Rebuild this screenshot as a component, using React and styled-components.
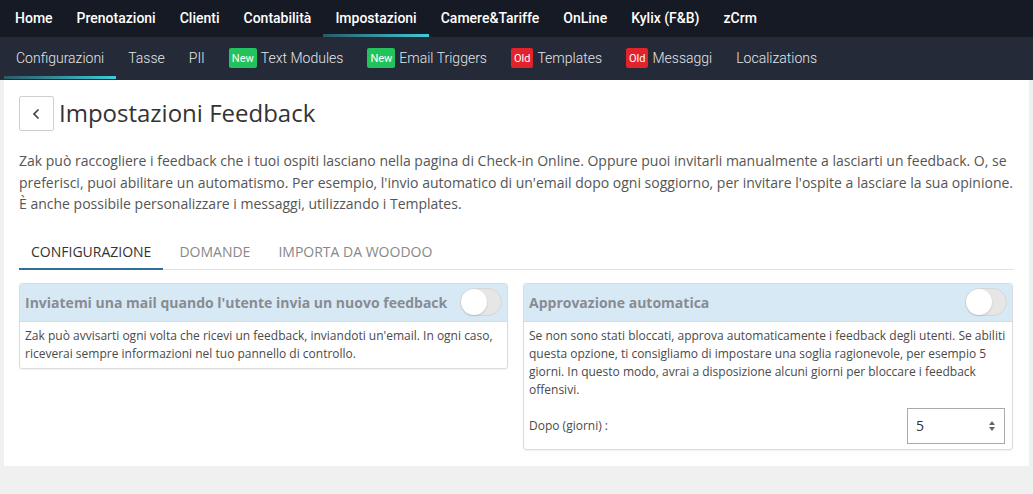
import styled, { createGlobalStyle } from 'styled-components'
import { useState } from 'react'

const GlobalStyle = createGlobalStyle`
    html, body {
        margin: 0;
        padding: 0;
        background: #f0f0f0;
    }
    * {
        box-sizing: border-box;
    }
`

const TopNav = styled.nav`
    height: 37px;
    background: #161a24;
    display: flex;
    align-items: stretch;
    padding-left: 3px;
`

const TopItem = styled.div`
    position: relative;
    padding: 0 12px;
    display: flex;
    align-items: center;
    font-family: Roboto, "Liberation Sans", sans-serif;
    font-weight: 500;
    font-size: 14px;
    color: #ffffff;
    padding-bottom: 2px;

    &::after {
        content: '';
        display: ${props => (props.$active ? 'block' : 'none')};
        position: absolute;
        left: 0;
        right: 0;
        bottom: 0;
        height: 3px;
        background: linear-gradient(to right, #2b5a66, #3fcbd9);
    }
`

const SubNav = styled.nav`
    height: 43px;
    background: #242a37;
    display: flex;
    align-items: stretch;
    padding-left: 4px;
`

const SubItem = styled.div`
    position: relative;
    padding: 0 12px;
    display: flex;
    align-items: center;
    gap: 4px;
    font-family: Roboto, "Liberation Sans", sans-serif;
    font-weight: 300;
    font-size: 14px;
    color: #e4e6ea;
    padding-bottom: 1px;

    &::after {
        content: '';
        display: ${props => (props.$active ? 'block' : 'none')};
        position: absolute;
        left: 0;
        right: 0;
        bottom: 1px;
        height: 3px;
        background: linear-gradient(to right, #2b5a66, #3fcbd9);
    }
`

const Badge = styled.span`
    display: inline-flex;
    align-items: center;
    height: 20px;
    padding: 0 3px;
    border-radius: 2px;
    font-size: 11px;
    font-weight: 400;
    color: #fff;
    background: ${props => (props.$kind === 'new' ? '#22c25c' : '#e2232b')};
`

const Page = styled.main`
    margin: 0 4px;
    background: #fff;
    padding: 16px 15px 16px 15px;
    font-family: "Open Sans", "Liberation Sans", sans-serif;
`

const TitleRow = styled.div`
    display: flex;
    align-items: center;
    gap: 5px;
`

const BackButton = styled.button`
    width: 35px;
    height: 35px;
    border: 1px solid #cfcfcf;
    border-radius: 2px;
    background: #fff;
    display: flex;
    align-items: center;
    justify-content: center;
    padding: 0;
    color: #444;
`

const Title = styled.h1`
    margin: 0 0 2px 0;
    font-size: 24px;
    line-height: 31px;
    font-weight: 400;
    color: #333;
`

const Intro = styled.p`
    margin: 19px 0 0 0;
    font-size: 14px;
    line-height: 21.5px;
    color: #555;
`

const Tabs = styled.div`
    margin-top: 20px;
    display: flex;
    gap: 4px;
    border-bottom: 1px solid #e2e2e2;
`

const Tab = styled.div`
    padding: 0 12px;
    height: 35px;
    display: flex;
    align-items: center;
    font-size: 14px;
    text-transform: uppercase;
    color: ${props => (props.$active ? '#333' : '#888')};
    border-bottom: 2px solid ${props => (props.$active ? '#2f6f99' : 'transparent')};
    margin-bottom: -1px;
    padding-top: 1px;
`

const Cards = styled.div`
    margin-top: 13px;
    display: grid;
    grid-template-columns: 489px 490px;
    gap: 15px;
    align-items: start;
`

const Card = styled.section`
    border: 1px solid #dcdcdc;
    border-radius: 3px;
    box-shadow: 0 1px 2px rgba(0, 0, 0, 0.06);
    overflow: hidden;
`

const CardHeader = styled.header`
    height: 38px;
    background: #d8e9f6;
    border-bottom: 1px solid #cfdfea;
    display: flex;
    align-items: center;
    justify-content: space-between;
    padding: 0 5px 0 5px;
`

const CardTitle = styled.div`
    font-size: 14px;
    font-weight: 700;
    color: #878c92;
`

const Toggle = styled.div`
    width: 42px;
    height: 28px;
    border-radius: 14px;
    background: #e6e6e6;
    border: 1px solid #d6d6d6;
    position: relative;

    &::before {
        content: '';
        position: absolute;
        left: ${props => (props.$on ? '14px' : '0')};
        top: 0;
        width: 26px;
        height: 26px;
        border-radius: 50%;
        background: #fff;
        box-shadow: 0 1px 2px rgba(0, 0, 0, 0.15);
    }
`

const CardBody = styled.div`
    padding: 5px 5px 5px 5px;
    font-size: 12px;
    line-height: 18px;
    color: #4a4a4a;
`

const FieldRow = styled.div`
    margin-top: 9px;
    display: flex;
    align-items: center;
    justify-content: space-between;
    padding-right: 2px;
`

const NumberBox = styled.div`
    width: 98px;
    height: 36px;
    border: 1px solid #aaa;
    display: flex;
    align-items: center;
    justify-content: space-between;
    padding: 0 8px 0 8px;
    font-size: 14px;
    color: #333;
`

function BackIcon() {
    return (
        <svg width="14" height="14" viewBox="0 0 14 14">
            <path d="M8.5 2.5 L4 7 L8.5 11.5" fill="none" stroke="#444" strokeWidth="1.7" />
        </svg>
    )
}

function Spinner() {
    return (
        <svg width="8" height="12" viewBox="0 0 8 12">
            <path d="M4 1 L7 5 L1 5 Z" fill="#666" />
            <path d="M4 11 L7 7 L1 7 Z" fill="#666" />
        </svg>
    )
}

const topItems = ['Home', 'Prenotazioni', 'Clienti', 'Contabilità', 'Impostazioni', 'Camere&Tariffe', 'OnLine', 'Kylix (F&B)', 'zCrm']

const subItems = [
    { label: 'Configurazioni', active: true },
    { label: 'Tasse' },
    { label: 'PII' },
    { label: 'Text Modules', badge: 'new' },
    { label: 'Email Triggers', badge: 'new' },
    { label: 'Templates', badge: 'old' },
    { label: 'Messaggi', badge: 'old' },
    { label: 'Localizations' },
]

export default function App() {
    const [days] = useState(5)

    return (
        <>
            <GlobalStyle />
            <TopNav>
                {topItems.map(item => (
                    <TopItem key={item} $active={item === 'Impostazioni'}>{item}</TopItem>
                ))}
            </TopNav>
            <SubNav>
                {subItems.map(item => (
                    <SubItem key={item.label} $active={item.active}>
                        {item.badge && <Badge $kind={item.badge}>{item.badge === 'new' ? 'New' : 'Old'}</Badge>}
                        {item.label}
                    </SubItem>
                ))}
            </SubNav>
            <Page>
                <TitleRow>
                    <BackButton><BackIcon /></BackButton>
                    <Title>Impostazioni Feedback</Title>
                </TitleRow>
                <Intro>
                    Zak può raccogliere i feedback che i tuoi ospiti lasciano nella pagina di Check-in Online. Oppure puoi invitarli manualmente a lasciarti un feedback. O, se preferisci, puoi abilitare un automatismo. Per esempio, l'invio automatico di un'email dopo ogni soggiorno, per invitare l'ospite a lasciare la sua opinione.
                    <br />
                    È anche possibile personalizzare i messaggi, utilizzando i Templates.
                </Intro>
                <Tabs>
                    <Tab $active>Configurazione</Tab>
                    <Tab>Domande</Tab>
                    <Tab>Importa da Woodoo</Tab>
                </Tabs>
                <Cards>
                    <Card>
                        <CardHeader>
                            <CardTitle>Inviatemi una mail quando l'utente invia un nuovo feedback</CardTitle>
                            <Toggle />
                        </CardHeader>
                        <CardBody>
                            Zak può avvisarti ogni volta che ricevi un feedback, inviandoti un'email. In ogni caso, riceverai sempre informazioni nel tuo pannello di controllo.
                        </CardBody>
                    </Card>
                    <Card>
                        <CardHeader>
                            <CardTitle>Approvazione automatica</CardTitle>
                            <Toggle />
                        </CardHeader>
                        <CardBody>
                            Se non sono stati bloccati, approva automaticamente i feedback degli utenti. Se abiliti questa opzione, ti consigliamo di impostare una soglia ragionevole, per esempio 5 giorni. In questo modo, avrai a disposizione alcuni giorni per bloccare i feedback offensivi.
                            <FieldRow>
                                <span>Dopo (giorni) :</span>
                                <NumberBox>
                                    <span>{days}</span>
                                    <Spinner />
                                </NumberBox>
                            </FieldRow>
                        </CardBody>
                    </Card>
                </Cards>
            </Page>
        </>
    )
}
